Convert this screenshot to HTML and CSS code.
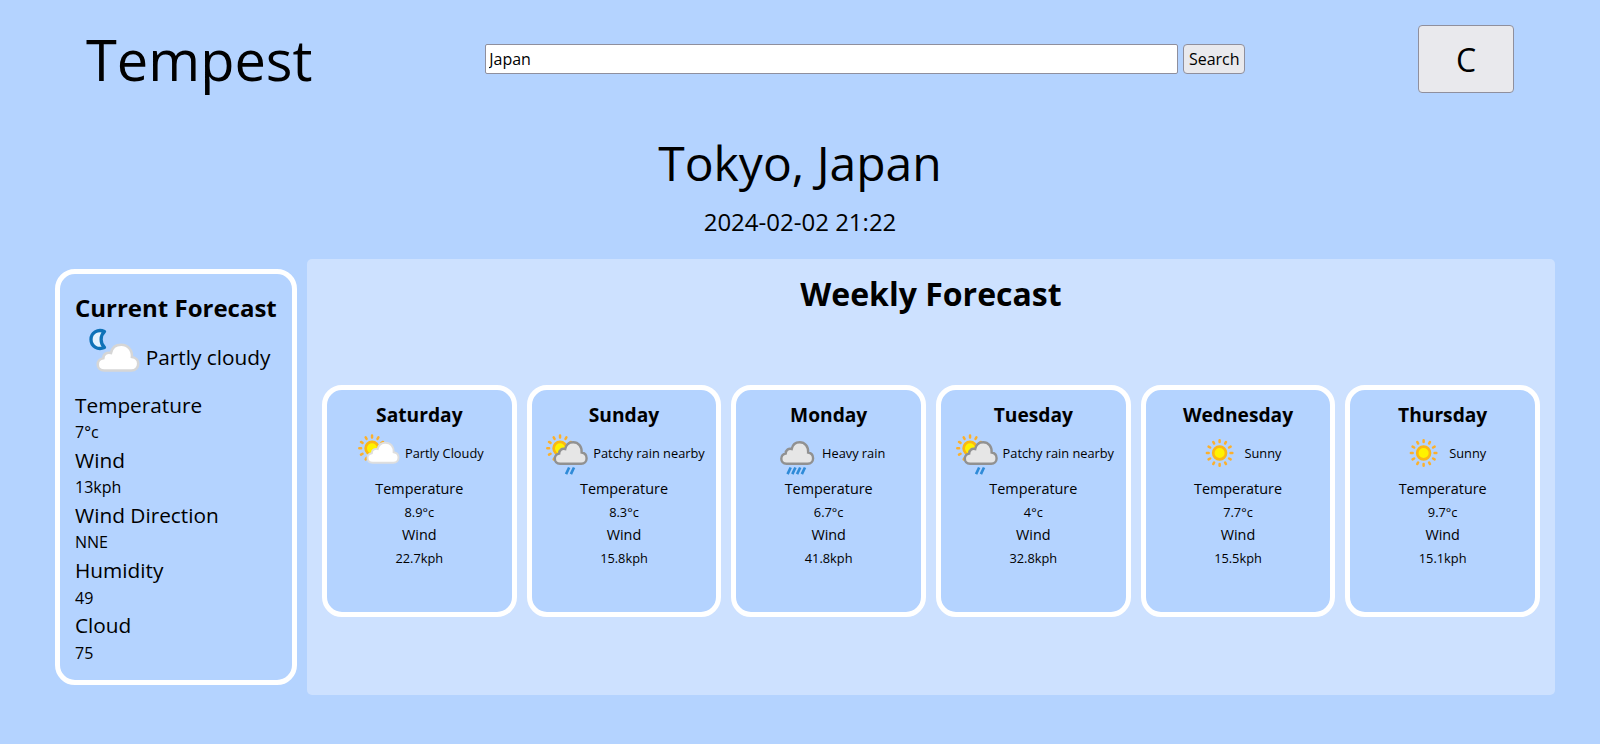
FILE: index.html
```html
<!DOCTYPE html>
<html lang="en">
<head>
<meta charset="utf-8">
<title>Tempest</title>
<link rel="stylesheet" href="styles.css">
</head>
<body>
<svg width="0" height="0" class="defs" aria-hidden="true">
  <defs>
    <path id="cloud" d="M23 44.5 C18.500 44.500 16.500 41.500 16.500 38.500 C16.500 35 19 32.500 22 32.200 C22 28 25.500 26 29.500 27 C30.500 21.500 34.500 18.800 39.500 18.800 C46 18.800 50.500 24 50 31 C54 31.500 56.200 34.500 56.200 37.800 C56.200 41.500 53.500 44.500 49.500 44.500 Z"/>
    <g id="rays" stroke="#fbb02d" stroke-width="3.200" stroke-linecap="round">
      <path d="M0-14V-16.300M7-12.120L8.150-14.120M12.120-7L14.120-8.150M14 0H16.300M12.120 7L14.120 8.150M7 12.120L8.150 14.120M0 14V16.300M-7 12.120L-8.150 14.120M-12.120 7L-14.120 8.150M-14 0H-16.300M-12.120-7L-14.120-8.150M-7-12.120L-8.150-14.120"/>
    </g>
    <g id="sun">
      <use href="#rays"/>
      <circle r="8.200" fill="#fff200" stroke="#fbb615" stroke-width="3.400"/>
    </g>
    <symbol id="sunny" viewBox="0 0 64 64"><use href="#sun" transform="translate(31.500 32)"/></symbol>
    <symbol id="partly" viewBox="0 0 64 64">
      <use href="#sun" transform="translate(21.800 26)"/>
      <use href="#cloud" transform="translate(-.5 0)" fill="#fff" stroke="#dedede" stroke-width="2.500"/>
    </symbol>
    <symbol id="patchy" viewBox="0 0 64 64">
      <use href="#sun" transform="translate(21.800 26)"/>
      <use href="#cloud" transform="translate(-1.800 -2.200) scale(1.025 1.080)" fill="#e6e6e6" stroke="#919191" stroke-width="3"/>
      <path d="M33.500 50.500L29.500 59M39.700 50.500L35.700 59" stroke="#2f8bd8" stroke-width="3.400"/>
    </symbol>
    <symbol id="heavy" viewBox="0 0 64 64">
      <use href="#cloud" transform="translate(-5 -2.200) scale(1.025 1.080)" fill="#e6e6e6" stroke="#919191" stroke-width="3"/>
      <path d="M23.900 50.500L19.900 59M30 50.500L26 59M36.100 50.500L32.100 59M42.200 50.500L38.200 59" stroke="#2f8bd8" stroke-width="3.400"/>
    </symbol>
    <symbol id="night" viewBox="0 0 64 64">
      <path d="M22.500 5.500C15.500 2.500 9 7 9 13.500C9 20 15.500 24.500 22.500 21.500C18 17.500 18 9.500 22.500 5.500Z" fill="#e4f3ff" stroke="#0e72b8" stroke-width="3.300" stroke-linejoin="round"/>
      <use href="#cloud" transform="translate(-1.100 0) scale(1.020 1)" fill="#fff" stroke="#d6d6d6" stroke-width="2.500"/>
    </symbol>
  </defs>
</svg>
<header class="header">
  <div class="logo">Tempest</div>
  <form class="search">
    <input class="search-input" type="text" value="Japan">
    <button class="search-button" type="button">Search</button>
  </form>
  <button class="unit" type="button">C</button>
</header>
<section class="place">
  <div class="city">Tokyo, Japan</div>
  <div class="time">2024-02-02 21:22</div>
</section>
<main class="main">
  <section class="current">
    <h2 class="current-title">Current Forecast</h2>
    <div class="current-condition"><svg class="icon-large"><use href="#night"/></svg><span class="current-text">Partly cloudy</span></div>
    <div class="label">Temperature</div><div class="value">7°c</div>
    <div class="label">Wind</div><div class="value">13kph</div>
    <div class="label">Wind Direction</div><div class="value">NNE</div>
    <div class="label">Humidity</div><div class="value">49</div>
    <div class="label">Cloud</div><div class="value">75</div>
  </section>
  <section class="weekly">
    <h1 class="weekly-title">Weekly Forecast</h1>
    <div class="days">
      <article class="day">
        <h3 class="day-title">Saturday</h3>
        <div class="condition"><svg class="icon"><use href="#partly"/></svg><span>Partly Cloudy</span></div>
        <div class="day-label">Temperature</div><div class="day-value">8.9°c</div>
        <div class="day-label">Wind</div><div class="day-value">22.7kph</div>
      </article>
      <article class="day">
        <h3 class="day-title">Sunday</h3>
        <div class="condition"><svg class="icon"><use href="#patchy"/></svg><span>Patchy rain nearby</span></div>
        <div class="day-label">Temperature</div><div class="day-value">8.3°c</div>
        <div class="day-label">Wind</div><div class="day-value">15.8kph</div>
      </article>
      <article class="day">
        <h3 class="day-title">Monday</h3>
        <div class="condition"><svg class="icon"><use href="#heavy"/></svg><span>Heavy rain</span></div>
        <div class="day-label">Temperature</div><div class="day-value">6.7°c</div>
        <div class="day-label">Wind</div><div class="day-value">41.8kph</div>
      </article>
      <article class="day">
        <h3 class="day-title">Tuesday</h3>
        <div class="condition"><svg class="icon"><use href="#patchy"/></svg><span>Patchy rain nearby</span></div>
        <div class="day-label">Temperature</div><div class="day-value">4°c</div>
        <div class="day-label">Wind</div><div class="day-value">32.8kph</div>
      </article>
      <article class="day">
        <h3 class="day-title">Wednesday</h3>
        <div class="condition"><svg class="icon"><use href="#sunny"/></svg><span>Sunny</span></div>
        <div class="day-label">Temperature</div><div class="day-value">7.7°c</div>
        <div class="day-label">Wind</div><div class="day-value">15.5kph</div>
      </article>
      <article class="day">
        <h3 class="day-title">Thursday</h3>
        <div class="condition"><svg class="icon"><use href="#sunny"/></svg><span>Sunny</span></div>
        <div class="day-label">Temperature</div><div class="day-value">9.7°c</div>
        <div class="day-label">Wind</div><div class="day-value">15.1kph</div>
      </article>
    </div>
  </section>
</main>
</body>
</html>
```
FILE: styles.css
```css
* { box-sizing: border-box; margin: 0; padding: 0; }
html, body { height: 100%; }
body {
  background: #b4d3ff;
  color: #000;
  font-family: "Open Sans", "Noto Sans", sans-serif;
  font-size: 16px;
  overflow: hidden;
}
.defs { display: block; height: 0; }
.header {
  display: flex;
  align-items: center;
  justify-content: space-between;
  height: 118px;
  padding: 0 86px;
}
.logo { font-size: 56px; line-height: 77px; }
.search { display: flex; gap: 5px; width: 760px; height: 30px; }
.search-input {
  flex: 1;
  min-width: 0;
  padding: 0 3px;
  border: 1px solid #8f8f9d;
  border-radius: 2px;
  background: #fff;
  font: inherit;
}
.search-button, .unit {
  border: 1px solid #8f8f9d;
  border-radius: 4px;
  background: #e9e9ed;
  color: #000;
  font: inherit;
}
.search-button { width: 62px; }
.unit { width: 96px; height: 68px; font-size: 32px; }
.place { padding-top: 12px; height: 141px; text-align: center; }
.city { font-size: 48px; line-height: 66px; }
.time { margin-top: 8px; font-size: 24px; line-height: 36px; }
.main { display: flex; gap: 10px; align-items: center; padding: 0 45px 0 55px; }
.current {
  width: 242px;
  height: 416px;
  padding: 16px 15px 15px;
  border: 5px solid #fff;
  border-radius: 20px;
}
.current-title { font-size: 24px; line-height: 36px; white-space: nowrap; }
.current-condition {
  display: flex;
  align-items: center;
  justify-content: center;
  height: 64px;
  font-size: 20.8px;
  white-space: nowrap;
}
.current-text { padding-bottom: 2px; }
.icon-large { flex: none; width: 64px; height: 64px; }
.label { font-size: 20.8px; line-height: 30.2px; }
.value { font-size: 16px; line-height: 24.9px; }
.weekly {
  flex: 1;
  height: 436px;
  padding: 15px;
  border-radius: 5px;
  background: #cde1ff;
  text-align: center;
}
.weekly-title { height: 111px; font-size: 32px; line-height: 40px; }
.days { display: grid; grid-template-columns: repeat(6, 1fr); gap: 10px; }
.day {
  min-width: 0;
  height: 232px;
  padding: 10px 0;
  border: 5px solid #fff;
  border-radius: 20px;
  background: #b4d3ff;
}
.day-title { padding-top: 1px; font-size: 19.2px; line-height: 27px; }
.condition {
  display: flex;
  align-items: center;
  justify-content: center;
  height: 50px;
  font-size: 12.8px;
  white-space: nowrap;
}
.icon { flex: none; width: 50px; height: 50px; }
.day-label { font-size: 14.4px; line-height: 22px; }
.day-value { font-size: 12.8px; line-height: 24px; }
```
